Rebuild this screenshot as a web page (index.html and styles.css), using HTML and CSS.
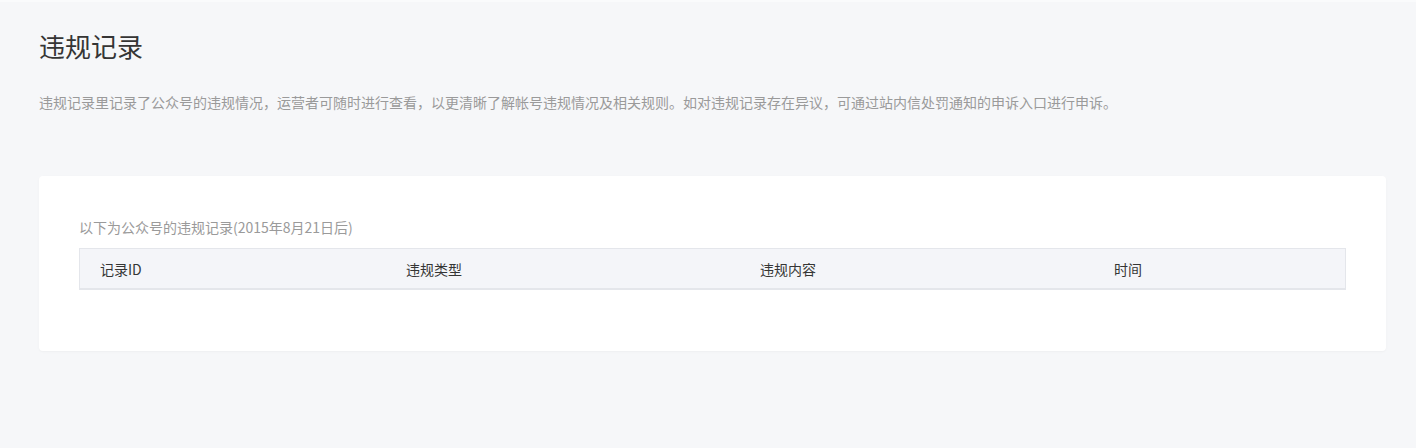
FILE: index.html
```html
<!DOCTYPE html>
<html lang="zh-CN">

<head>
    <meta charset="UTF-8">
    <title>违规记录</title>
    <link rel="stylesheet" href="styles.css">
</head>

<body>
    <div class="page">
        <h1 class="page-title">违规记录</h1>
        <p class="page-desc">违规记录里记录了公众号的违规情况，运营者可随时进行查看，以更清晰了解帐号违规情况及相关规则。如对违规记录存在异议，可通过站内信处罚通知的申诉入口进行申诉。</p>

        <div class="card">
            <p class="card-tips">以下为公众号的违规记录(2015年8月21日后)</p>
            <table class="record-table">
                <thead>
                    <tr>
                        <th class="col-id">记录ID</th>
                        <th class="col-type">违规类型</th>
                        <th class="col-content">违规内容</th>
                        <th class="col-time">时间</th>
                    </tr>
                </thead>
                <tbody></tbody>
            </table>
        </div>
    </div>
</body>

</html>
```

FILE: styles.css
```css
html, body {
    margin: 0;
    background-color: #f6f7f9;
}

body {
    font-family: "Noto Sans CJK SC", "Liberation Sans", sans-serif;
    color: #353535;
    border-top: 2px solid #fafbfc;
}

.page {
    padding: 26px 30px 60px 39px;
}

.page-title {
    margin: 0;
    font-size: 26px;
    font-weight: normal;
    line-height: 36px;
    color: #353535;
}

.page-desc {
    margin: 28px 0 0;
    font-size: 14px;
    line-height: 20px;
    color: #9a9a9a;
}

.card {
    margin-top: 64px;
    padding: 41px 40px 61px;
    background-color: #fff;
    border-radius: 4px;
    box-shadow: 0 1px 2px rgba(150, 150, 150, 0.08);
}

.card-tips {
    margin: 0 0 11px;
    font-size: 14px;
    line-height: 20px;
    color: #9a9a9a;
}

.record-table {
    width: 100%;
    border-collapse: collapse;
    table-layout: fixed;
}

.record-table th {
    height: 39px;
    padding: 0 0 0 20px;
    text-align: left;
    font-size: 14px;
    font-weight: normal;
    color: #353535;
    background-color: #f4f5f9;
    border-top: 1px solid #e4e6eb;
    border-bottom: 2px solid #e4e6eb;
}

.record-table th:first-child {
    border-left: 1px solid #e4e6eb;
}

.record-table th:last-child {
    border-right: 1px solid #e4e6eb;
}

.col-id {
    width: 286px;
}

.col-type,
.col-content {
    width: 334px;
}
```
